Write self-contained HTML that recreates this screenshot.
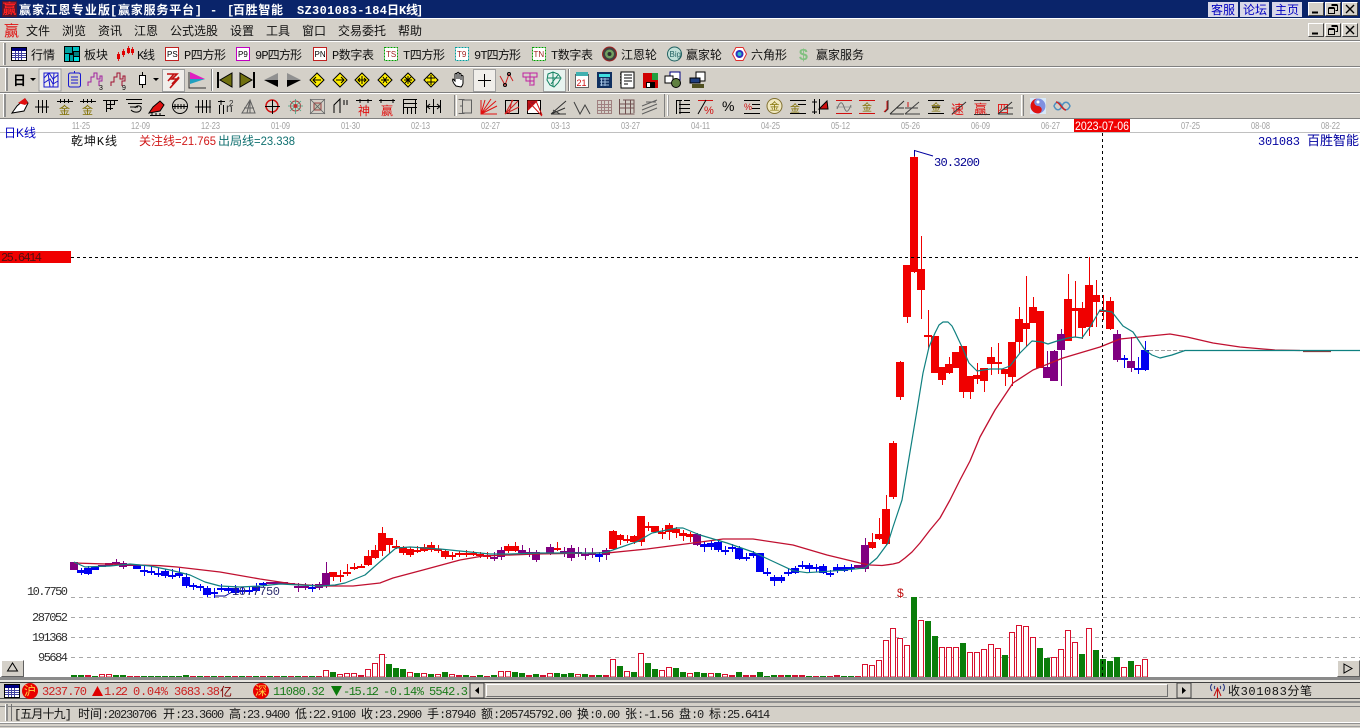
<!DOCTYPE html>
<html><head><meta charset="utf-8"><title>赢家江恩专业版</title>
<style>
html,body{margin:0;padding:0;background:#d4d0c8;overflow:hidden}
svg{display:block;position:absolute;left:0;top:0}
.c{font-family:"Liberation Mono","Noto Sans CJK SC",sans-serif;font-size:12px;fill:#101010}
.s{font-family:"Liberation Sans","Noto Sans CJK SC",sans-serif;font-size:12px}
.m{font-family:"Liberation Mono",monospace;font-size:12px;letter-spacing:-1.2px;fill:#202020}
.n{font-family:"Liberation Mono",monospace;font-size:12px}
.t{font-family:"Liberation Sans",sans-serif;font-size:10px;fill:#a0a0a0}
.ti{font-family:"Liberation Mono","Noto Sans CJK SC",sans-serif;font-size:12px;font-weight:bold;fill:#fff}
.i{fill:none;stroke:#000;stroke-width:1}
.cr{shape-rendering:crispEdges}
</style></head><body>
<svg width="1360" height="728" viewBox="0 0 1360 728" xmlns="http://www.w3.org/2000/svg">
<defs>
<g id="tbl"><rect x=".5" y=".5" width="15" height="13" fill="#fff" stroke="#000"/><rect x="1" y="1" width="14" height="3" fill="#000080"/><path d="M1 6.5h14M1 8.5h14M1 10.5h14M4.5 4v9M7.5 4v9M10.5 4v9" stroke="#4040a0" fill="none"/></g>
<g id="dia"><path d="M0-7L7 0 0 7-7 0z" fill="#ffee00" stroke="#000"/></g>
<g id="wc">
<rect x="1308" y="2" width="16" height="14" fill="#d4d0c8"/><path d="M1308.5 15.5v-13h15" stroke="#fff" fill="none"/><path d="M1308.5 15.5h15v-13" stroke="#404040" fill="none"/>
<path d="M1312 12.5h6" stroke="#000" stroke-width="2"/>
<rect x="1325" y="2" width="16" height="14" fill="#d4d0c8"/><path d="M1325.5 15.5v-13h15" stroke="#fff" fill="none"/><path d="M1325.5 15.5h15v-13" stroke="#404040" fill="none"/>
<path d="M1331.5 5.5h6v5h-2M1328.5 8.5h6v5h-6zM1331.5 4.5h6M1328.5 7.5h6" stroke="#000" fill="none"/>
<rect x="1342" y="2" width="16" height="14" fill="#d4d0c8"/><path d="M1342.5 15.5v-13h15" stroke="#fff" fill="none"/><path d="M1342.5 15.5h15v-13" stroke="#404040" fill="none"/>
<path d="M1346 5l8 8M1354 5l-8 8" stroke="#000" stroke-width="1.4"/>
</g>
</defs>

<!-- chrome background -->
<rect width="1360" height="728" fill="#d4d0c8"/>
<rect width="1360" height="18" fill="#0a246a"/>
<rect y="18" width="1360" height="1" fill="#fff"/>
<g class="cr">
<rect y="40" width="1360" height="1" fill="#808080"/><rect y="41" width="1360" height="1" fill="#fff"/>
<rect y="66" width="1360" height="1" fill="#808080"/><rect y="67" width="1360" height="1" fill="#fff"/>
<rect y="92" width="1360" height="1" fill="#808080"/><rect y="93" width="1360" height="1" fill="#fff"/>
<rect y="118" width="1360" height="1" fill="#808080"/>
</g>
<rect y="119" width="1360" height="558" fill="#fff"/>
<rect y="132" width="1360" height="1" fill="#c0c0c0"/>

<!-- title bar -->
<rect x="2" y="1" width="15" height="16" fill="#501830"/>
<text x="2.5" y="14" class="s" style="font-size:14px;font-weight:bold" fill="#ff2020">赢</text>
<text x="19" y="14" class="ti" textLength="91">赢家江恩专业版</text>
<text x="110" y="14" class="ti" textLength="92">[赢家服务平台]</text>
<text x="210" y="14" class="ti">-</text>
<text x="227" y="14" class="ti">[</text>
<text x="233" y="14" class="ti" textLength="50">百胜智能</text>
<text x="297" y="14" class="ti" textLength="90">SZ301083-184</text>
<text x="387" y="14" class="ti">日</text><text x="399" y="14" class="ti">K</text><text x="406" y="14" class="ti">线</text><text x="416" y="14" class="ti">]</text>
<g class="cr">
<rect x="1208" y="2" width="30" height="15" fill="#d8d8e8"/><rect x="1240" y="2" width="29" height="15" fill="#d8d8e8"/><rect x="1272" y="2" width="30" height="15" fill="#d8d8e8"/>
</g>
<text x="1211" y="14" class="s" style="font-size:12px" fill="#0000c0">客服</text>
<text x="1243" y="14" class="s" style="font-size:12px" fill="#0000c0">论坛</text>
<text x="1275" y="14" class="s" style="font-size:12px" fill="#0000c0">主页</text>
<use href="#wc"/>
<use href="#wc" y="21"/>

<!-- menu -->
<text x="4" y="36" class="s" style="font-size:15px" fill="#e01010">赢</text>
<text x="26" y="35" class="c">文件</text><text x="62" y="35" class="c">浏览</text><text x="98" y="35" class="c">资讯</text><text x="134" y="35" class="c">江恩</text><text x="170" y="35" class="c">公式选股</text><text x="230" y="35" class="c">设置</text><text x="266" y="35" class="c">工具</text><text x="302" y="35" class="c">窗口</text><text x="338" y="35" class="c">交易委托</text><text x="398" y="35" class="c">帮助</text>

<!-- toolbar 1 -->
<g class="cr"><rect x="3" y="43" width="1" height="22" fill="#fff"/><rect x="4" y="43" width="2" height="22" fill="#909090"/>
<rect x="5" y="68" width="1" height="23" fill="#fff"/><rect x="6" y="68" width="2" height="23" fill="#909090"/>
<rect x="3" y="94" width="1" height="23" fill="#fff"/><rect x="4" y="94" width="2" height="23" fill="#909090"/></g>
<use href="#tbl" x="11" y="47"/>
<text x="31" y="59" class="c">行情</text>
<g class="cr"><rect x="64" y="46" width="16" height="16" fill="#000"/><rect x="65" y="47" width="7" height="6" fill="#00a0a0"/><rect x="73" y="47" width="6" height="4" fill="#00c0c0"/><rect x="65" y="54" width="4" height="7" fill="#00c0c0"/><rect x="70" y="55" width="3" height="6" fill="#00a0a0"/><rect x="74" y="52" width="5" height="4" fill="#008080"/><rect x="74" y="57" width="5" height="4" fill="#00e0e0"/></g>
<text x="84" y="59" class="c">板块</text>
<path d="M118.5 52v9M123.5 49v8M128.5 46v8M132.5 47v8" stroke="#e02020"/><path d="M117 54h3v5h-3zM122 51h3v4h-3zM127 48h3v5h-3zM131 49h3v4h-3z" fill="#e00000"/>
<text x="137" y="59" class="c" textLength="18">K线</text>
<rect x="165.500" y="47.500" width="13" height="13" fill="#fff" stroke="#c02020"/><text x="167" y="57" class="s" style="font-size:8px">PS</text>
<text x="184" y="59" class="c" textLength="42">P四方形</text>
<rect x="236.500" y="47.500" width="13" height="13" fill="#fff" stroke="#c000c0"/><text x="238" y="57" class="s" style="font-size:8px">P9</text>
<text x="255" y="59" class="c" textLength="47">9P四方形</text>
<rect x="313.500" y="47.500" width="13" height="13" fill="#fff" stroke="#c02020"/><text x="314.500" y="57" class="s" style="font-size:8px">PN</text>
<text x="332" y="59" class="c" textLength="42">P数字表</text>
<rect x="384.500" y="47.500" width="13" height="13" fill="#fff" stroke="#00a000" stroke-dasharray="2 1"/><text x="386" y="57" class="s" style="font-size:8px" fill="#a02020">TS</text>
<text x="403" y="59" class="c" textLength="42">T四方形</text>
<rect x="455.500" y="47.500" width="13" height="13" fill="#fff" stroke="#00a0a0" stroke-dasharray="2 1"/><text x="457" y="57" class="s" style="font-size:8px" fill="#a02020">T9</text>
<text x="474" y="59" class="c" textLength="47">9T四方形</text>
<rect x="532.500" y="47.500" width="13" height="13" fill="#fff" stroke="#00a000" stroke-dasharray="2 1"/><text x="533.500" y="57" class="s" style="font-size:8px" fill="#a02020">TN</text>
<text x="551" y="59" class="c" textLength="42">T数字表</text>
<circle cx="609.500" cy="54" r="7" fill="#404040" stroke="#a02020"/><circle cx="609.500" cy="54" r="4.500" fill="#70a060"/><circle cx="609.500" cy="54" r="2" fill="#303030"/>
<text x="621" y="59" class="c">江恩轮</text>
<circle cx="674.500" cy="54" r="7" fill="#c0e0d8" stroke="#206060"/><text x="669.500" y="57" class="s" style="font-size:8px" fill="#206060">Big</text>
<text x="686" y="59" class="c">赢家轮</text>
<path d="M736 47.500h7l3.500 6.500-3.500 6.500h-7l-3.500-6.500z" fill="#fff" stroke="#e03030"/><circle cx="739.500" cy="54" r="4" fill="#3030c0"/><circle cx="739.500" cy="54" r="2" fill="#30c0c0"/>
<text x="751" y="59" class="c">六角形</text>
<text x="799" y="60" class="s" style="font-size:16px;font-weight:bold" fill="#80c080">$</text>
<text x="816" y="59" class="c">赢家服务</text>

<!-- toolbar 2 -->
<text x="13" y="85" class="s" style="font-size:13px;font-weight:bold" fill="#000">日</text>
<path d="M30 78h6l-3 3z" fill="#000"/>
<rect x="39" y="69" width="22" height="22" fill="#f0eeea" stroke="#a0a0a0"/>
<path d="M44 73h14v14H44zM44 78l5-5 4 6 5-4M44 83l6-4 3 5 5-3M48 73l2 14M54 73l-1 14" class="i" stroke="#1818d0" style="stroke:#1818d0"/>
<path d="M68.500 75q0-2 2-2h8q2 0 2 2v10q0 2-2 2h-8q-2 0-2-2zM71 77h7M71 80h7M71 83h7M74.500 71v2" class="i" style="stroke:#1818d0"/>
<path d="M88 86v-4h3v-5h3v-4h3v6h3v-3h2v5h-3v5" class="i" style="stroke:#a020a0"/><text x="99" y="90" class="s" style="font-size:7px">3</text>
<path d="M111 86v-4h3v-5h3v-4h3v6h3v-3h2v5h-3v5" class="i" style="stroke:#a01030"/><text x="122" y="90" class="s" style="font-size:7px">9</text>
<path d="M142.500 72v16" stroke="#000"/><rect x="139.500" y="75.500" width="6" height="9" fill="#fff" stroke="#000"/>
<path d="M153 78h6l-3 3z" fill="#000"/>
<rect x="162.500" y="69.500" width="22" height="22" fill="#f0eeea" stroke="#a0a0a0"/>
<path d="M167 74l10 0-5 5 6 0-8 9M168 81l6-7M172 84l7-7" stroke="#c01010" stroke-width="1.600" fill="none"/>
<path d="M189 72v16h17" stroke="#303030" fill="none"/><path d="M190 72l15 7-15 4z" fill="#e020c0"/><path d="M190 79l15 0-15 5z" fill="#20a0c0"/>
<path d="M211.500 69v22" stroke="#808080"/><path d="M212.500 69v22" stroke="#fff"/>
<path d="M232 73v14l-12-7z" fill="#707010" stroke="#000"/><path d="M218 72v16" stroke="#000" stroke-width="2"/>
<path d="M240 73v14l12-7z" fill="#707010" stroke="#000"/><path d="M254 72v16" stroke="#000" stroke-width="2"/>
<path d="M264 80l14-7v7z" fill="#909090"/><path d="M264 80l14 7v-7z" fill="#000"/>
<path d="M301 80l-14-7v7z" fill="#909090"/><path d="M301 80l-14 7v-7z" fill="#000"/>
<use href="#dia" x="317" y="80"/><path d="M313 80h8M316 77l-3 3 3 3" class="i"/>
<use href="#dia" x="340" y="80"/><path d="M336 80h8M341 77l3 3-3 3" class="i"/>
<use href="#dia" x="362" y="80"/><path d="M358 80h8M360 78l-2 2 2 2M364 78l2 2-2 2M362 76v8" class="i"/>
<use href="#dia" x="385" y="80"/><path d="M381 80h8M383 77l4 6M387 77l-4 6" class="i"/>
<use href="#dia" x="408" y="80"/><path d="M404 80h8M408 76v8M405 77l6 6M411 77l-6 6" class="i"/>
<use href="#dia" x="431" y="80"/><path d="M427 78h8M427 82h8M431 75v10" class="i"/>
<path d="M456 86c-3-3-4-6-3-7l2 2v-7c1-1 2 0 2 0v5-6c1-1 2-1 2 0v6-5c1-1 2 0 2 0v6-4c1-1 2 0 2 0v7c0 2-1 3-2 4z" fill="#fff" stroke="#000"/>
<rect x="473.500" y="69.500" width="22" height="22" fill="#f0eeea" stroke="#a0a0a0"/><path d="M484.500 74v13M478 80.500h13" stroke="#000" fill="none"/>
<path d="M500 76l5 9 4-11 4 7" stroke="#d02020" fill="none"/><circle cx="505" cy="85" r="1.500" fill="none" stroke="#000"/><circle cx="509" cy="74" r="1.500" fill="none" stroke="#000"/>
<path d="M523 73h14v4h-14zM526 77v4h8v-4M530 73v13M526 81h8v4h-3" fill="none" stroke="#c020a0"/>
<rect x="543.500" y="69.500" width="22" height="22" fill="#e8f4f0" stroke="#a0a0a0"/><path d="M548 74l5-2 5 2 3 4-3 5-4 4-4-2-3-5zM548 78h12M551 84l7-9M553 72v14" fill="none" stroke="#108060"/>
<path d="M568.500 69v22" stroke="#808080"/><path d="M569.500 69v22" stroke="#fff"/>
<rect x="575.500" y="74.500" width="13" height="13" fill="#fff" stroke="#606060"/><rect x="576" y="72" width="12" height="4" fill="#40b0b0"/><text x="576.500" y="86" class="s" style="font-size:9px" fill="#d01010">21</text>
<rect x="597" y="72" width="15" height="16" fill="#103060"/><rect x="599" y="74" width="11" height="3" fill="#40e0e0"/><path d="M600 79h9M600 82h9M600 85h9M601.500 78v8M605 78v8" stroke="#a0c0e0"/>
<rect x="621" y="72" width="13" height="16" fill="#fff" stroke="#000"/><path d="M621 74h-1M621 77h-1M621 80h-1M621 83h-1M624 75h8M624 78h8M624 81h8M624 84h4" stroke="#000"/>
<rect x="643" y="73" width="15" height="15" fill="#d00000"/><rect x="652" y="73" width="6" height="7" fill="#20a040"/><rect x="646" y="82" width="9" height="6" fill="#000"/><rect x="647" y="83" width="3" height="4" fill="#fff"/>
<rect x="670" y="72" width="10" height="8" fill="#fff" stroke="#000080"/><rect x="665" y="76" width="8" height="7" fill="#fff" stroke="#000"/><circle cx="676" cy="83" r="4.500" fill="#608040" stroke="#000"/>
<rect x="696" y="72" width="9" height="9" fill="#fff" stroke="#000"/><rect x="690" y="78" width="10" height="5" fill="#204080" stroke="#000"/><rect x="692" y="84" width="12" height="4" fill="#505020"/>

<!-- toolbar 3 -->
<path d="M12 113l5-7 8-7 3 4-4 8z" fill="#fff" stroke="#000"/><path d="M18 103l7-5 3 5-3 2z" fill="#e01010"/>
<path d="M38.500 100v13M42.500 100v13M46.500 100v13M35 107h14" class="i"/>
<path d="M60.500 99v4M64.500 99v4M68.500 99v4M57 101.500h16" class="i"/><text x="59" y="114" class="s" style="font-size:11px" fill="#807000">金</text>
<path d="M83.500 99v4M87.500 99v4M91.500 99v4M80 101.500h16" class="i"/><text x="82" y="114" class="s" style="font-size:11px" fill="#807000">金</text>
<path d="M103 100.500h15M106.500 100v12M110.500 100v10M114.500 100v5M107 104.500h8M107 108.500h6" class="i"/>
<path d="M126 99.500h16M128 103.500h14M130 107h8M131 110c3 3 9 3 10-1s-5-4-6-1" class="i"/>
<path d="M149 113l4-6 7-6 4 4-4 6z" fill="#e01010" stroke="#000"/><path d="M150 115.500h15M152 113v3M156 113v3M160 113v3" class="i"/>
<circle cx="180" cy="106" r="7.500" fill="none" stroke="#000"/><path d="M172 106.500h16M175 104v5M178 104v5M181 104v5M184 104v5" class="i"/>
<path d="M198.500 100v13M202.500 100v13M206.500 100v13M210 100v13M195 107h16" class="i"/>
<path d="M218 101.500h7M221 100v5M219.500 105v9M223.500 105v9" class="i"/><text x="226" y="112" class="s" style="font-size:12px" fill="#303030">n</text><text x="229" y="106" class="s" style="font-size:8px" fill="#303030">2</text>
<path d="M242 113l8-13 5 13zM250 100l-3 13M250 100v13M244 108h10" fill="none" stroke="#606060"/>
<circle cx="272" cy="106" r="6" fill="none" stroke="#d01010" stroke-width="1.500"/><path d="M265 106.500h15M272.500 100v14" stroke="#000" fill="none"/>
<circle cx="295.500" cy="106" r="5" fill="none" stroke="#b04040"/><path d="M288 106h15M295.500 99v15M290 101l11 10M301 101l-11 10" stroke="#40a080" fill="none" stroke-width=".8"/><circle cx="295.500" cy="106" r="2" fill="#c03030"/>
<rect x="310.500" y="99.500" width="14" height="14" fill="none" stroke="#808080"/><rect x="314" y="103" width="7" height="7" fill="#c0c0b0" stroke="#a04040"/><path d="M310 99l15 15M325 99l-15 15" stroke="#606060" stroke-width=".8"/>
<path d="M334 113v-8l6-6v14M344 100v5M347 100v5" class="i"/>
<path d="M356 100.500h16M360 99v4M368 99v4" stroke="#000" fill="none"/><text x="358" y="115" class="s" style="font-size:12px" fill="#e01010">神</text>
<path d="M379 100.500h16M381 99v4M393 99v4" stroke="#000" fill="none"/><text x="381" y="115" class="s" style="font-size:12px" fill="#e01010">赢</text>
<path d="M403.500 99v15M403 99.500h14M403 103.500h14M403 107.500h14M407.500 108v6M411.500 108v6M415.500 99v15" class="i"/>
<path d="M426.500 100v13M440.500 100v13M433.500 99v15M427 106.500h13M430 104l-3 2.500 3 2.500M437 104l3 2.500-3 2.500" class="i"/>
<path d="M454.500 95v21" stroke="#808080"/><path d="M456.500 95v21" stroke="#fff"/>
<path d="M458.500 99.500h6M462.500 100v13h9v-13h-9M460 106h2M458.500 113.500h6" fill="none" stroke="#606060"/>
<path d="M481 114l16-8M481 114l15-13M481 114l10-15M481 114l4-14M481 100v14h16" stroke="#e01010" fill="none"/>
<rect x="505.500" y="100.500" width="13" height="13" fill="none" stroke="#000"/><path d="M505 114l13-13M505 114l8-14M505 114l14-7M512 100l-3 14" stroke="#d02020" fill="none"/>
<rect x="527.500" y="100.500" width="13" height="13" fill="#fff" stroke="#000"/><path d="M528 101h9l-9 9zM528 101l14 15M536 101l6 14" fill="#a01020" stroke="#d01010"/>
<path d="M551 114l15-13M551 114l14-6M551 114h15M553 110l7 4" stroke="#303030" fill="none"/>
<path d="M574 102l6 12 5-9 5 9" stroke="#404040" fill="none"/>
<g fill="none" stroke="#a08080"><rect x="597.500" y="100.500" width="14" height="13"/><path d="M597 104.500h15M597 107.500h15M597 110.500h15M601.500 100v14M604.500 100v14M608.500 100v14"/></g>
<g fill="none" stroke="#705050"><path d="M619.500 99v15h15M623 100h11v13M619 104h15M619 108h15M625.500 100v14M630.500 100v14"/></g>
<path d="M642 106l15-6M642 110l15-6M642 114l15-6M646 102l10 0" stroke="#606060" fill="none"/>
<path d="M664.500 94v23" stroke="#808080"/><path d="M667.500 95v21" stroke="#fff"/><path d="M668.500 95v21" stroke="#a0a0a0"/>
<path d="M676.500 100v14M676 100.500h6M679 104.500h11M679 108.500h11M679 112.500h11M684 100.500h6M680 100v14" class="i"/>
<path d="M698 100.500h15" stroke="#d01010"/><path d="M698 114l8-14" stroke="#000"/><text x="704" y="114" class="s" style="font-size:11px" fill="#d01010">%</text>
<text x="722" y="111" class="s" style="font-size:14px" fill="#000">%</text>
<path d="M744 100.500h16M752 104.500h8M752 108.500h8M744 113.500h16" stroke="#000" fill="none"/><text x="744" y="110" class="s" style="font-size:9px" fill="#d01010">%</text>
<circle cx="774.500" cy="106" r="7.500" fill="#f0e8c0" stroke="#807030"/><text x="769.500" y="110" class="s" style="font-size:10px" fill="#807000">金</text>
<path d="M790 100.500h16M798 104.500h8M790 113.500h16" stroke="#000" fill="none"/><text x="790" y="112" class="s" style="font-size:10px" fill="#807000">金</text>
<path d="M814.500 99v15M812 102h5M812 112h5M819.500 99v15" stroke="#000" fill="none"/><path d="M819 109l8-8 1 8z" fill="#d01010" stroke="#000"/>
<path d="M836 100.500h16M836 113.500h16" stroke="#d01010"/><path d="M836 107h16" stroke="#a0a0a0"/><path d="M837 109c3-8 5-8 7-2s4 6 7-2" stroke="#707070" fill="none"/>
<path d="M859 100.500h16M859 113.500h16" stroke="#d01010"/><text x="862" y="111" class="s" style="font-size:10px" fill="#807000">金</text>
<path d="M888 100v9l-3 3M890 114l14-13M890 114h14M896 108h8" stroke="#303030" fill="none"/><path d="M887 101v8l-3 3" stroke="#d01010" fill="none"/>
<path d="M905 114l14-12M905 114h15M905 108h13" stroke="#404040" fill="none"/><path d="M908 102v5" stroke="#d01010"/>
<path d="M928 100.500h16M928 113.500h16M932 107h8" stroke="#000" fill="none"/><text x="931" y="111" class="s" style="font-size:10px" fill="#807000">金</text>
<text x="951" y="114" class="s" style="font-size:13px" fill="#e01010">速</text><path d="M952 114l14-12" stroke="#303030" fill="none"/>
<text x="974" y="114" class="s" style="font-size:13px" fill="#e01010">赢</text><path d="M974 100.500h16M974 114.500h16" stroke="#303030"/>
<text x="997" y="113" class="s" style="font-size:12px" fill="#e01010">四</text><path d="M998 114l14-12M998 114h15M1005 108h8" stroke="#303030" fill="none"/>
<path d="M1023.500 95v21" stroke="#808080"/><path d="M1021.500 95v21" stroke="#fff"/>
<rect x="1030" y="98" width="16" height="16" fill="#d8e8f8"/><circle cx="1038" cy="106" r="7.500" fill="#8090e0"/><path d="M1038 98.500a7.500 7.500 0 0 0 0 15a3.700 3.700 0 0 0 0-7.500a3.700 3.700 0 0 1 0-7.500z" fill="#e01010"/><circle cx="1038" cy="102" r="1.500" fill="#fff"/><circle cx="1038" cy="110" r="1.500" fill="#e01010"/>
<path d="M1054 106c2-5 6-5 8 0s6 5 8 0c-2-5-6-5-8 0s-6 5-8 0z" fill="none" stroke="#5090c0" stroke-width="1.500"/><path d="M1056 102c4 0 6 8 10 8" stroke="#d02020" fill="none" stroke-width="1.500"/>

<!-- time axis -->
<g class="t">
<text x="72" y="129" textLength="18" lengthAdjust="spacingAndGlyphs">11-25</text>
<text x="131" y="129" textLength="19" lengthAdjust="spacingAndGlyphs">12-09</text>
<text x="201" y="129" textLength="19" lengthAdjust="spacingAndGlyphs">12-23</text>
<text x="271" y="129" textLength="19" lengthAdjust="spacingAndGlyphs">01-09</text>
<text x="341" y="129" textLength="19" lengthAdjust="spacingAndGlyphs">01-30</text>
<text x="411" y="129" textLength="19" lengthAdjust="spacingAndGlyphs">02-13</text>
<text x="481" y="129" textLength="19" lengthAdjust="spacingAndGlyphs">02-27</text>
<text x="551" y="129" textLength="19" lengthAdjust="spacingAndGlyphs">03-13</text>
<text x="621" y="129" textLength="19" lengthAdjust="spacingAndGlyphs">03-27</text>
<text x="691" y="129" textLength="19" lengthAdjust="spacingAndGlyphs">04-11</text>
<text x="761" y="129" textLength="19" lengthAdjust="spacingAndGlyphs">04-25</text>
<text x="831" y="129" textLength="19" lengthAdjust="spacingAndGlyphs">05-12</text>
<text x="901" y="129" textLength="19" lengthAdjust="spacingAndGlyphs">05-26</text>
<text x="971" y="129" textLength="19" lengthAdjust="spacingAndGlyphs">06-09</text>
<text x="1041" y="129" textLength="19" lengthAdjust="spacingAndGlyphs">06-27</text>
<text x="1181" y="129" textLength="19" lengthAdjust="spacingAndGlyphs">07-25</text>
<text x="1251" y="129" textLength="19" lengthAdjust="spacingAndGlyphs">08-08</text>
<text x="1321" y="129" textLength="19" lengthAdjust="spacingAndGlyphs">08-22</text>
</g>
<rect x="1074" y="119" width="56" height="13" fill="#f00000"/>
<text x="1075" y="130" class="s" style="font-size:12px" fill="#fff" textLength="54" lengthAdjust="spacingAndGlyphs">2023-07-06</text>

<!-- chart headers -->
<text x="4" y="137" class="s" fill="#0000c0" textLength="32">日K线</text>
<text x="71" y="145" class="c" fill="#000" textLength="46">乾坤K线</text>
<text x="139" y="145" class="s" fill="#d01818">关注线</text>
<text x="175" y="145" class="s" fill="#d01818" textLength="41" lengthAdjust="spacingAndGlyphs">=21.765</text>
<text x="218" y="145" class="s" fill="#107070">出局线</text>
<text x="254" y="145" class="s" fill="#107070" textLength="41" lengthAdjust="spacingAndGlyphs">=23.338</text>
<text x="1258" y="145" class="n" fill="#0000a0" textLength="42">301083</text>
<text x="1307" y="145" class="s" style="font-size:13px" fill="#0000a0">百胜智能</text>

<!-- guides -->
<g class="cr">
<path d="M71 597.500H1360M71 617.500H1360M71 637.500H1360M71 657.500H1360" stroke="#a8a8a8" stroke-dasharray="4 4" fill="none"/>
<path d="M1149 350.500H1185" stroke="#a0a0a0" stroke-dasharray="4 2" fill="none"/>
<rect x="0" y="251" width="71" height="12" fill="#f00000"/>
</g>
<text x="1" y="261" class="n" fill="#501010" textLength="41">25.6414</text>
<text x="27" y="595" class="n" fill="#303030" textLength="41">10.7750</text>
<text x="32" y="621" class="n" fill="#303030" textLength="36">287052</text>
<text x="32" y="641" class="n" fill="#303030" textLength="36">191368</text>
<text x="38" y="661" class="n" fill="#303030" textLength="30">95684</text>

<!-- volumes -->
<g class="cr">
<path stroke-width="6" stroke="#0a7d0a" fill="none" d="M74 675V677M81 675V677M95 676V677M116 675V677M123 675V677M144 676V677M151 676V677M158 676V677M165 676V677M172 676V677M179 676V677M186 675V677M200 676V677M214 676V677M228 676V677M242 676V677M256 676V677M270 676V677M284 676V677M298 676V677M312 676V677M333 672V677M389 664V677M396 668V677M403 669V677M417 673V677M431 674V677M445 672V677M466 675V677M480 675V677M494 675V677M515 672V677M522 673V677M536 674V677M557 673V677M564 674V677M571 673V677M585 674V677M599 675V677M620 666V677M634 672V677M648 663V677M655 669V677M676 668V677M683 672V677M697 672V677M704 673V677M718 673V677M739 672V677M760 672V677M767 676V677M774 675V677M788 675V677M809 676V677M823 676V677M844 676V677M851 676V677M914 597V677M928 621V677M935 636V677M963 643V677M1005 655V677M1040 648V677M1047 658V677M1082 654V677M1096 650V677M1103 659V677M1110 661V677M1117 657V677M1131 661V677"/>
<path stroke-width="6" stroke="#d01030" fill="none" d="M88 675V677M130 676V677M137 676V677M193 676V677M207 676V677M221 676V677M235 676V677M249 676V677M263 676V677M277 676V677M291 676V677M305 676V677M319 676V677M361 675V677M459 675V677M473 676V677M487 676V677M529 675V677M543 675V677M592 675V677M606 675V677M732 675V677M746 675V677M753 675V677M781 675V677M795 675V677M802 675V677M816 676V677M830 676V677M837 675V677M858 676V677"/>
<path stroke="#d8102e" fill="#fff" d="M99.500 674.500h5V677h-5zM106.500 674.500h5V677h-5zM323.500 670.500h5V677h-5zM337.500 674.500h5V677h-5zM344.500 673.500h5V677h-5zM351.500 673.500h5V677h-5zM365.500 669.500h5V677h-5zM372.500 663.500h5V677h-5zM379.500 654.500h5V677h-5zM407.500 672.500h5V677h-5zM421.500 673.500h5V677h-5zM435.500 674.500h5V677h-5zM449.500 674.500h5V677h-5zM498.500 671.500h5V677h-5zM505.500 671.500h5V677h-5zM547.500 673.500h5V677h-5zM575.500 674.500h5V677h-5zM610.500 659.500h5V677h-5zM624.500 671.500h5V677h-5zM638.500 653.500h5V677h-5zM659.500 670.500h5V677h-5zM666.500 667.500h5V677h-5zM687.500 673.500h5V677h-5zM708.500 673.500h5V677h-5zM722.500 674.500h5V677h-5zM862.500 664.500h5V677h-5zM869.500 665.500h5V677h-5zM876.500 660.500h5V677h-5zM883.500 640.500h5V677h-5zM890.500 628.500h5V677h-5zM897.500 638.500h5V677h-5zM904.500 645.500h5V677h-5zM918.500 620.500h5V677h-5zM939.500 647.500h5V677h-5zM946.500 647.500h5V677h-5zM953.500 647.500h5V677h-5zM967.500 652.500h5V677h-5zM974.500 652.500h5V677h-5zM981.500 649.500h5V677h-5zM988.500 644.500h5V677h-5zM995.500 648.500h5V677h-5zM1009.500 632.500h5V677h-5zM1016.500 625.500h5V677h-5zM1023.500 626.500h5V677h-5zM1030.500 637.500h5V677h-5zM1051.500 657.500h5V677h-5zM1058.500 649.500h5V677h-5zM1065.500 630.500h5V677h-5zM1072.500 642.500h5V677h-5zM1086.500 628.500h5V677h-5zM1121.500 667.500h5V677h-5zM1135.500 665.500h5V677h-5zM1142.500 659.500h5V677h-5z"/>

<!-- candles: wicks and bodies -->
<path stroke="#f00000" fill="none" d="M333.500 572V581M340.500 570V582M347.500 564V576M354.500 563V570M361.500 564V568M368.500 550V566M375.500 545V559M382.500 527V556M389.500 538V553M396.500 540V549M403.500 546V555M410.500 547V557M417.500 546V553M424.500 544V552M431.500 542V552M438.500 545V553M445.500 549V559M452.500 552V560M459.500 551V557M466.500 550V557M473.500 551V556M480.500 552V558M487.500 552V559M508.500 544V553M515.500 542V552M557.500 542V551M613.500 530V550M620.500 534V545M627.500 535V543M634.500 535V544M641.500 516V546M648.500 522V531M655.500 526V533M662.500 528V539M669.500 523V540M676.500 527V538M683.500 530V541M690.500 532V542M872.500 533V549M879.500 518V540M886.500 495V545M893.500 441V499M900.500 361V400M907.500 265V323M914.500 150V273M921.500 236V319M928.500 310V350M935.500 336V373M942.500 367V385M949.500 357V374M956.500 352V368M963.500 346V398M970.500 376V399M977.500 363V384M984.500 368V392M991.500 347V375M998.500 343V374M1005.500 369V386M1012.500 342V386M1019.500 307V354M1026.500 276V347M1033.500 297V323M1040.500 311V368M1068.500 274V341M1075.500 281V337M1082.500 302V339M1089.500 257V336M1096.500 280V327M1103.500 295V320M1110.500 297V330"/>
<path stroke="#f00000" stroke-width="8" fill="none" d="M333 572V577M340 575V577M347 572V574M354 567V569M361 566V568M368 556V565M375 550V558M382 533V551M389 538V545M396 546V548M403 547V553M410 549V555M417 550V552M424 547V551M431 545V550M438 549V551M445 551V557M452 555V557M459 553V555M466 553V555M473 553V555M480 554V556M487 555V557M508 546V551M515 546V551M557 548V550M613 531V549M620 535V540M627 539V541M634 536V542M641 516V542M648 526V528M655 526V532M662 532V534M669 525V532M676 529V533M683 533V536M690 534V537M872 542V548M879 534V539M886 509V544M893 443V497M900 362V397M907 265V317M914 157V272M921 269V290M928 335V337M935 336V373M942 367V380M949 364V373M956 352V368M963 346V392M970 376V392M977 375V379M984 368V381M991 357V364M998 362V364M1005 369V374M1012 342V377M1019 319V342M1026 323V329M1033 307V323M1040 311V368M1068 299V341M1075 308V311M1082 308V328M1089 285V327M1096 295V302M1103 310V312M1110 301V329"/>
<path stroke="#0000f0" fill="none" d="M81.500 568V575M88.500 566V575M144.500 565V576M151.500 566V575M158.500 567V577M165.500 569V578M172.500 569V579M179.500 568V578M186.500 573V588M193.500 583V590M200.500 584V591M207.500 586V597M214.500 588V598M221.500 584V592M228.500 586V593M235.500 585V595M242.500 587V594M249.500 587V594M256.500 583V592M263.500 582V587M312.500 584V592M599.500 552V562M704.500 542V552M711.500 540V550M718.500 540V552M725.500 546V555M732.500 544V552M739.500 546V560M746.500 553V561M753.500 551V558M767.500 568V576M774.500 575V586M781.500 575V583M788.500 568V576M795.500 566V574M802.500 561V569M809.500 563V572M816.500 564V572M823.500 564V574M830.500 570V577M837.500 564V573M844.500 565V572M851.500 564V572M1124.500 355V368M1138.500 357V374M1145.500 341V371"/>
<path stroke="#0000f0" stroke-width="8" fill="none" d="M81 570V573M88 568V574M95 567V570M137 565V569M144 570V572M151 571V573M158 573V575M165 571V576M172 575V577M179 573V576M186 577V586M193 585V587M200 586V588M207 588V595M214 592V594M221 588V590M228 588V591M235 588V593M242 590V592M249 590V592M256 586V591M263 583V585M312 587V589M599 554V557M704 544V547M711 543V547M718 542V550M725 550V552M732 547V549M739 548V559M746 557V559M753 553V556M760 553V572M767 572V574M774 577V581M781 577V581M788 572V574M795 568V573M802 565V567M809 565V569M816 567V569M823 566V573M830 573V575M837 567V571M844 567V571M851 567V569M1124 358V360M1138 368V370M1145 350V370"/>
<path stroke="#800080" fill="none" d="M116.500 559V564M123.500 561V569M298.500 583V592M305.500 583V590M319.500 582V590M326.500 562V588M494.500 552V561M501.500 547V560M522.500 545V554M529.500 548V557M536.500 550V562M550.500 544V555M564.500 547V557M571.500 545V561M578.500 547V557M585.500 548V560M592.500 548V558M606.500 548V560M697.500 533V546M865.500 538V572M1047.500 351V378M1054.500 350V381M1061.500 329V386M1117.500 330V362M1131.500 337V372"/>
<path stroke="#800080" stroke-width="8" fill="none" d="M74 562V570M102 565V567M109 563V566M116 562V564M123 563V567M130 564V566M270 582V584M277 582V584M284 582V584M291 583V585M298 586V588M305 586V588M319 584V588M326 573V586M494 557V559M501 550V557M522 550V553M529 552V554M536 552V560M550 547V553M564 551V553M571 548V558M578 552V554M585 554V556M592 553V555M606 550V555M697 534V545M858 565V568M865 545V569M1047 367V378M1054 351V381M1061 334V350M1117 334V360M1131 361V368"/>
</g>

<!-- moving averages -->
<path fill="none" stroke="#c01030" stroke-width="1.300" stroke-linejoin="round" d="M74 563L160 565.700 177 567 220 572 260 579 293 584 323 586 353 586 380 583 393 578 423 570 460 560 483 556 537 554 610 552.700 647 549 693 543 723 539 753 539 793 545 827 555 860 563 870 565 882 565.500 893 564 899 562.500 905 558 912 552 920 543 930 530 940 518 950 500 960 480 970 461 980 437 995 410 1013 383 1033 370 1063 358 1100 347 1120 339 1150 336 1170 334 1187 337 1213 343 1240 347 1263 349 1275 350 1300 350.500"/>
<path fill="none" stroke="#8a3a3a" stroke-width="1.300" d="M1303 351.500H1331"/>
<path fill="none" stroke="#0f8080" stroke-width="1.200" stroke-linejoin="round" d="M74 562L85 567 110 566 130 564 150 566 170 570 190 575 205 582 220 586 240 587 260 586 280 584 300 585 320 586 335 585 345 583 365 575 382 560 396 548 410 547 440 549 470 552 490 554 510 554 540 553 570 553 600 553 607 552 637 541.700 652 533 677 528 683 528 700 535 727 543 753 552 770 560 793 570.700 807 572.700 837 570.700 865 568 877 558 888 543 893 527 902 500 917 410 923 373 929 347 935 333 939 325 943 322 948 322 952 326 955 332 962 347 969 363 977 371 990 369 1002 369 1010 366 1020 353 1032 341 1042 342 1048 344 1057 341 1068 338 1075 337 1082 338 1090 327 1100 310 1112 312 1123 326 1133 332 1145 350 1152 355 1160 358 1172 355 1185 350.500 1360 350.500"/>

<!-- crosshair -->
<g class="cr"><path d="M71 257.500H1360" stroke="#000" stroke-dasharray="3 3"/><path d="M1102.500 133V677" stroke="#000" stroke-dasharray="3 3"/></g>

<!-- annotations -->
<path d="M914.500 156V150.500L933 156" fill="none" stroke="#0000a0"/>
<text x="934" y="166" class="n" fill="#000090" textLength="46">30.3200</text>
<path d="M215 596H225L232 592" fill="none" stroke="#000090"/>
<text x="232" y="595" class="n" fill="#303070" textLength="48">10.7750</text>
<text x="897" y="597" class="s" style="font-size:12px" fill="#c01010">$</text>

<!-- corner buttons -->
<rect x="1" y="660" width="23" height="17" fill="#d4d0c8"/><path d="M1.500 676.500v-16h22" stroke="#fff" fill="none"/><path d="M1.500 676.500h22v-16" stroke="#606060" fill="none"/><path d="M12.500 663l-5 8h10z" fill="none" stroke="#000"/>
<rect x="1337" y="660" width="23" height="17" fill="#d4d0c8"/><path d="M1337.500 676.500v-16h22" stroke="#fff" fill="none"/><path d="M1337.500 676.500h22v-16" stroke="#606060" fill="none"/><path d="M1344 664l8 4.500-8 4.500z" fill="none" stroke="#000"/>

<!-- bottom bands -->
<g class="cr">
<rect y="677" width="1360" height="3" fill="#8a8a8a"/>
<rect y="680" width="1360" height="2" fill="#e8e6e0"/>
<rect y="682" width="1360" height="1" fill="#404040"/>
<rect y="698" width="1360" height="1" fill="#505050"/>
<rect y="701" width="1360" height="2" fill="#909090"/>
<rect y="706" width="1360" height="1" fill="#808080"/>
<rect y="722" width="1360" height="1" fill="#fff"/>
<rect y="723" width="1360" height="1" fill="#909090"/>
<rect y="726" width="1360" height="1" fill="#a0a0a0"/>
<rect x="5" y="704" width="1" height="17" fill="#fff"/><rect x="6" y="704" width="2" height="17" fill="#909090"/>
<rect x="11" y="704" width="1" height="17" fill="#707070"/>
</g>

<!-- status row 1 -->
<use href="#tbl" x="4" y="684"/>
<circle cx="30" cy="691" r="8" fill="#e80000"/><text x="24" y="695" class="s" style="font-size:12px" fill="#ffd040">沪</text>
<text x="42" y="695" class="n" fill="#cc2020" textLength="45">3237.70</text>
<path d="M92 696l5.500-10 5.500 10z" fill="#e00000"/>
<text x="104" y="695" class="n" fill="#cc2020" textLength="24">1.22</text>
<text x="133" y="695" class="n" fill="#cc2020" textLength="35">0.04%</text>
<text x="174" y="695" class="n" fill="#cc2020" textLength="46">3683.38</text>
<text x="220" y="696" class="s" fill="#800000">亿</text>
<circle cx="261" cy="691" r="8" fill="#e80000"/><text x="255" y="695" class="s" style="font-size:12px" fill="#ffd040">深</text>
<text x="273" y="695" class="n" fill="#1a7a1a" textLength="52">11080.32</text>
<path d="M331 686l5.500 10 5.500-10z" fill="#0a7a0a"/>
<text x="343" y="695" class="n" fill="#1a7a1a" textLength="36">-15.12</text>
<text x="383" y="695" class="n" fill="#1a7a1a" textLength="41">-0.14%</text>
<text x="429" y="695" class="n" fill="#1a7a1a" textLength="39">5542.3</text>

<!-- scrollbar -->
<rect x="470" y="683" width="14" height="15" fill="#d4d0c8" stroke="#404040"/><path d="M479 687v7l-4-3.500z" fill="#000"/>
<rect x="486" y="684" width="682" height="13" fill="#d4d0c8"/><path d="M486.500 696.500v-12h681" stroke="#fff" fill="none"/><path d="M486.500 696.500h681v-12" stroke="#707070" fill="none"/>
<rect x="1177" y="683" width="14" height="15" fill="#d4d0c8" stroke="#404040"/><path d="M1182 687v7l4-3.500z" fill="#000"/>
<path d="M1217.500 688v10M1214 696l3.500-8 3.500 8" stroke="#c01010" fill="none"/><path d="M1212 684a5 5 0 0 0 0 7M1223 684a5 5 0 0 1 0 7M1215 686a2 2 0 0 0 0 3M1220 686a2 2 0 0 1 0 3" stroke="#203080" fill="none"/>
<text x="1228" y="695" class="c" fill="#101010" textLength="84">收301083分笔</text>

<!-- status row 2 -->
<text x="14" y="718" class="c" textLength="58">[五月十九]</text>
<text x="78" y="718" class="c">时间</text><text x="102" y="718" class="m">:20230706</text>
<text x="163" y="718" class="c">开</text><text x="175" y="718" class="m">:23.3600</text>
<text x="229" y="718" class="c">高</text><text x="241" y="718" class="m">:23.9400</text>
<text x="295" y="718" class="c">低</text><text x="307" y="718" class="m">:22.9100</text>
<text x="361" y="718" class="c">收</text><text x="373" y="718" class="m">:23.2900</text>
<text x="427" y="718" class="c">手</text><text x="439" y="718" class="m">:87940</text>
<text x="481" y="718" class="c">额</text><text x="493" y="718" class="m">:205745792.00</text>
<text x="577" y="718" class="c">换</text><text x="589" y="718" class="m">:0.00</text>
<text x="625" y="718" class="c">张</text><text x="637" y="718" class="m">:-1.56</text>
<text x="679" y="718" class="c">盘</text><text x="691" y="718" class="m">:0</text>
<text x="709" y="718" class="c">标</text><text x="721" y="718" class="m">:25.6414</text>
</svg>
</body></html>
